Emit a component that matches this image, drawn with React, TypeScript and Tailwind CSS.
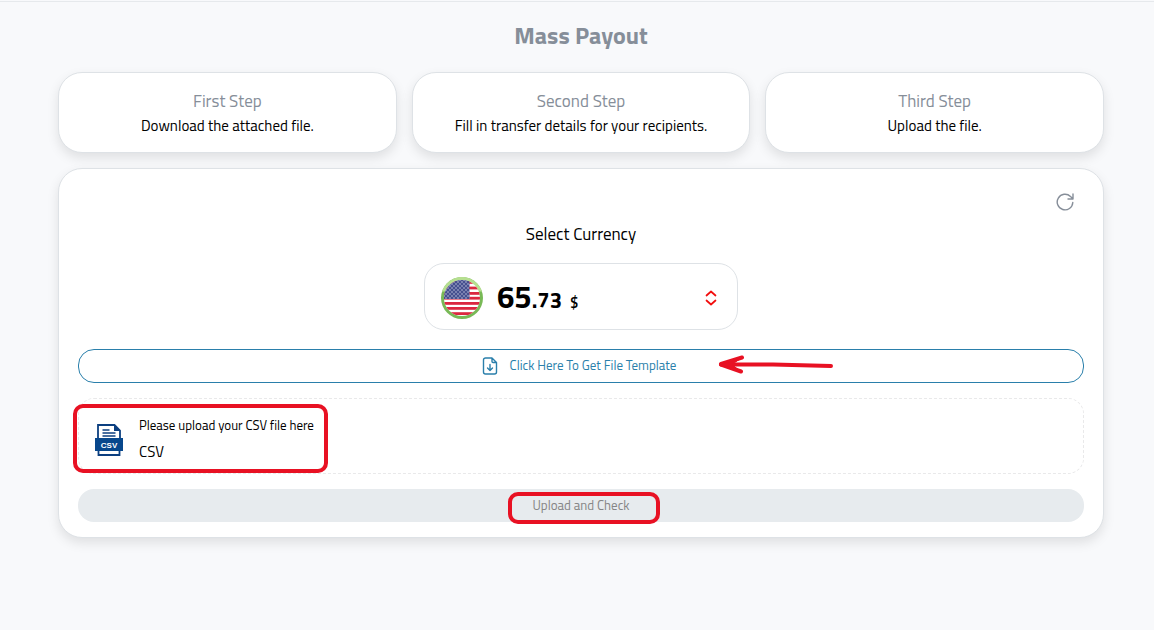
import { useId } from 'react';

const steps = [
    { title: 'First Step', text: 'Download the attached file.' },
    { title: 'Second Step', text: 'Fill in transfer details for your recipients.' },
    { title: 'Third Step', text: 'Upload the file.' },
];

function UsFlag() {
    const id = useId();

    return (
        <svg viewBox="0 0 42 42" className="size-[42px] shrink-0" aria-hidden="true">
            <defs>
                <clipPath id={`${id}-disc`}>
                    <circle cx="21" cy="21" r="18" />
                </clipPath>
                <pattern id={`${id}-stars`} width="4" height="4" patternUnits="userSpaceOnUse">
                    <circle cx="1" cy="1" r="0.7" fill="#d5d8ea" />
                    <circle cx="3" cy="3" r="0.7" fill="#d5d8ea" />
                </pattern>
            </defs>
            <circle cx="21" cy="21" r="21" fill="#78b956" />
            <path d="M1 14.5a21 21 0 0 1 40 0z" fill="#b6df90" />
            <g clipPath={`url(#${id}-disc)`}>
                <rect width="42" height="42" fill="#fff" />
                {[4, 9.6, 15, 19.8, 25, 30, 35.2].map((y) => (
                    <rect key={y} y={y} width="42" height="2.8" fill="#db2840" />
                ))}
                <rect width="28.5" height="22" fill="#46508f" />
                <rect width="28.5" height="22" fill={`url(#${id}-stars)`} />
            </g>
        </svg>
    );
}

function CsvIcon() {
    return (
        <svg viewBox="0 0 28 32" className="h-8 w-7 shrink-0" aria-hidden="true">
            <path d="M3 15V1h16.5l5.5 5.5V15M3.5 27v4h21v-4" fill="none" stroke="#0c3f80" strokeWidth="1.8" />
            <path d="M19 1v6h6z" fill="#0c3f80" />
            <path d="M7.5 6h7M7.5 9h13M7.5 12h13" stroke="#0c3f80" strokeWidth="1.3" />
            <path d="M0 14h28v13H0z" fill="#07478c" />
            <text x="14" y="23.5" textAnchor="middle" fill="#fff" fontSize="8" fontWeight="700" fontFamily="Liberation Sans, sans-serif">
                CSV
            </text>
        </svg>
    );
}

function DownloadFileIcon() {
    return (
        <svg viewBox="0 0 16 18" className="h-[18px] w-4 shrink-0" fill="none" stroke="currentColor" strokeWidth="1.4" strokeLinecap="round" strokeLinejoin="round" aria-hidden="true">
            <path d="M10 1H3.5a2 2 0 0 0-2 2v12a2 2 0 0 0 2 2h9a2 2 0 0 0 2-2V5.5zM10 1v3.500a1 1 0 0 0 1 1h3.500M8 7.5v6M5.5 11 8 13.5l2.5-2.5" />
        </svg>
    );
}

function RefreshIcon() {
    return (
        <svg viewBox="0 0 18 18" className="size-[18px]" fill="none" stroke="currentColor" strokeWidth="1.4" strokeLinecap="round" strokeLinejoin="round" aria-hidden="true">
            <path d="M16.8 9.5A7.8 7.8 0 1 1 14.5 3.5L17 5.8M17 1v5h-5" />
        </svg>
    );
}

export default function App() {
    return (
        <div className="min-h-screen bg-[#f8f9fb] pt-px font-['Titillium_Web',Cairo,Roboto,sans-serif] text-black">
            <div className="border-t border-[#e6e9ec] pr-[50px] pb-10 pl-[58px]">
                <h1 className="pt-[17px] text-center text-2xl leading-8 font-bold text-[#868e99]">Mass Payout</h1>

                <section className="mt-[21px] grid grid-cols-3 gap-[15px]">
                    {steps.map((step) => (
                        <article key={step.title} className="rounded-3xl border border-[#dee2e6] bg-white pt-4 pb-[14px] text-center shadow-[0_5px_12px_rgba(0,0,0,0.1)]">
                            <h2 className="text-[17px] leading-6 text-[#868e99]">{step.title}</h2>
                            <p className="text-[15px] leading-[25px]">{step.text}</p>
                        </article>
                    ))}
                </section>

                <main className="relative mt-[15px] rounded-3xl border border-[#dee2e6] bg-white px-[19px] pt-6 pb-[15px] shadow-[0_5px_12px_rgba(0,0,0,0.1)]">
                    <div className="flex justify-end pr-[10px]">
                        <button type="button" aria-label="Refresh" className="text-[#868e99]">
                            <RefreshIcon />
                        </button>
                    </div>

                    <h2 className="mt-[11px] text-center text-[17px] leading-6">Select Currency</h2>

                    <button type="button" aria-label="Select currency" className="mx-auto mt-[17px] flex h-[67px] w-full max-w-[314px] items-center rounded-[20px] border border-[#dee2e6] px-4 pt-0.5">
                        <UsFlag />
                        <span className="ml-[14px] flex items-baseline font-bold">
                            <span className="text-[31px]">65</span>
                            <span className="text-[22px]">.73</span>
                            <span className="ml-2 text-[15px] font-semibold">$</span>
                        </span>
                        <svg viewBox="0 0 12 16" className="mr-1 ml-auto h-4 w-3 text-[#f20d0d]" fill="none" stroke="currentColor" strokeWidth="1.7" strokeLinecap="round" strokeLinejoin="round" aria-hidden="true">
                            <path d="m1.5 5.5 4.5-4 4.5 4M1.5 10.5l4.5 4 4.5-4" />
                        </svg>
                    </button>

                    <div className="relative mt-[19px]">
                        <button type="button" className="flex h-[34px] w-full items-center justify-center gap-3 rounded-2xl border border-[#2a7fab] pr-1 text-[13px] text-[#2a7fab]">
                            <DownloadFileIcon />
                            Click Here To Get File Template
                        </button>
                        {/* hand-drawn arrow pointing at the template link */}
                        <svg viewBox="0 0 116 20" className="pointer-events-none absolute top-[6px] left-1/2 ml-[137px] h-5 w-[116px]" fill="none" stroke="#e81123" strokeLinecap="round" strokeLinejoin="round" aria-hidden="true">
                            <path d="M3 9 24 2.5M3 9.5l20 7" strokeWidth="4" />
                            <path d="M3 9.5h52l58 1.5" strokeWidth="4" />
                            <path d="m3 9.5 18-5-7 5 6 5z" fill="#e81123" strokeWidth="1" />
                        </svg>
                    </div>

                    <div className="relative mt-[15px]">
                        <label className="flex h-[76px] items-center rounded-2xl border border-dashed border-[#e9e9ea] pt-2 pl-4">
                            <input type="file" accept=".csv" className="sr-only" />
                            <CsvIcon />
                            <span className="ml-4 flex flex-col pb-0.5">
                                <span className="text-[13px] leading-[26px]">Please upload your CSV file here</span>
                                <span className="text-[15px] leading-7">CSV</span>
                            </span>
                        </label>
                        <div className="pointer-events-none absolute top-[6px] -left-[5px] h-[69px] w-[255px] rounded-[10px] border-4 border-[#e81123]" />
                    </div>

                    <div className="relative mt-[15px]">
                        <button type="button" disabled className="h-[33px] w-full rounded-2xl bg-[#e7ebee] text-[13px] text-[#858585]">
                            Upload and Check
                        </button>
                        <div className="pointer-events-none absolute top-[3px] left-1/2 ml-[-73px] h-8 w-[152px] rounded-[10px] border-4 border-[#e81123]" />
                    </div>
                </main>
            </div>
        </div>
    );
}
